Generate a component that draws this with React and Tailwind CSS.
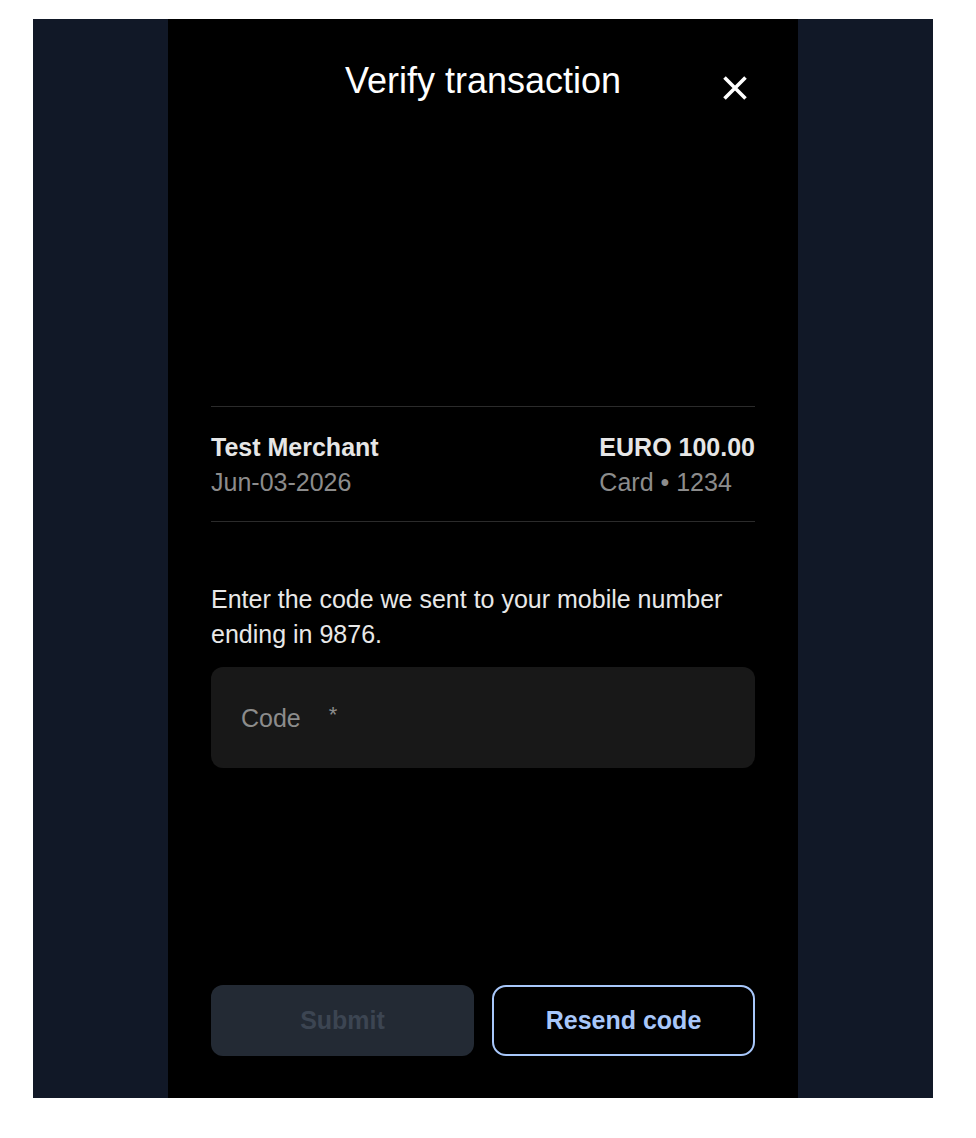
const CloseIcon = () => (
  <svg width="24" height="24" viewBox="0 0 24 24" fill="none" stroke="currentColor" strokeWidth="3.6">
    <path d="M1.5 1.5 22.5 22.5M22.5 1.5 1.5 22.5" />
  </svg>
);

const VerifyTransaction = () => {
  return (
    <div className="bg-black w-[630px] flex flex-col px-[43px] pt-[42px] pb-[42px]">
      {/* Header */}
      <div className="relative">
        <h1 className="text-[36px] leading-[40px] text-center text-white font-normal">
          Verify transaction
        </h1>
        <button
          type="button"
          aria-label="Close"
          className="absolute right-0 top-[7px] w-10 h-10 flex items-center justify-center text-white"
        >
          <CloseIcon />
        </button>
      </div>

      {/* Transaction summary */}
      <div className="mt-[305px] border-y border-[#2b2b2b] pt-[23px] pb-[21px] flex justify-between text-[25px] leading-[35px]">
        <div>
          <div className="font-bold text-[#e6e6e6]">Test Merchant</div>
          <div className="text-[#8c8c8c]">Jun-03-2026</div>
        </div>
        <div>
          <div className="font-bold text-[#e6e6e6]">EURO 100.00</div>
          <div className="text-[#8c8c8c]">Card • 1234</div>
        </div>
      </div>

      <p className="mt-[60px] text-[25px] leading-[35px] text-[#e8e8e8]">
        Enter the code we sent to your mobile number ending in 9876.
      </p>

      <div className="mt-[15px] h-[101px] rounded-[12px] bg-[#181818] pl-[30px] pt-[3px] flex items-center text-[25px] text-[#8c8c8c]">
        <span>Code</span>
        <span className="ml-[28px] -mt-[10px] text-[22px]">*</span>
      </div>

      {/* Actions */}
      <div className="mt-[217px] grid grid-cols-2 gap-[18px]">
        <button
          type="button"
          disabled
          className="h-[71px] rounded-[12px] bg-[#232a34] text-[#3c4552] text-[25px] font-bold"
        >
          Submit
        </button>
        <button
          type="button"
          className="h-[71px] rounded-[14px] border-[2.5px] border-[#a8c7fa] text-[#a8c7fa] text-[25px] font-bold"
        >
          Resend code
        </button>
      </div>
    </div>
  );
};

export default function App() {
  return (
    <div className="bg-white pt-[19px] pl-[33px] pb-[40px] font-['Liberation_Sans',Arial,sans-serif]">
      <div className="bg-[#111827] w-[900px] h-[1079px] flex justify-center">
        <VerifyTransaction />
      </div>
    </div>
  );
}
